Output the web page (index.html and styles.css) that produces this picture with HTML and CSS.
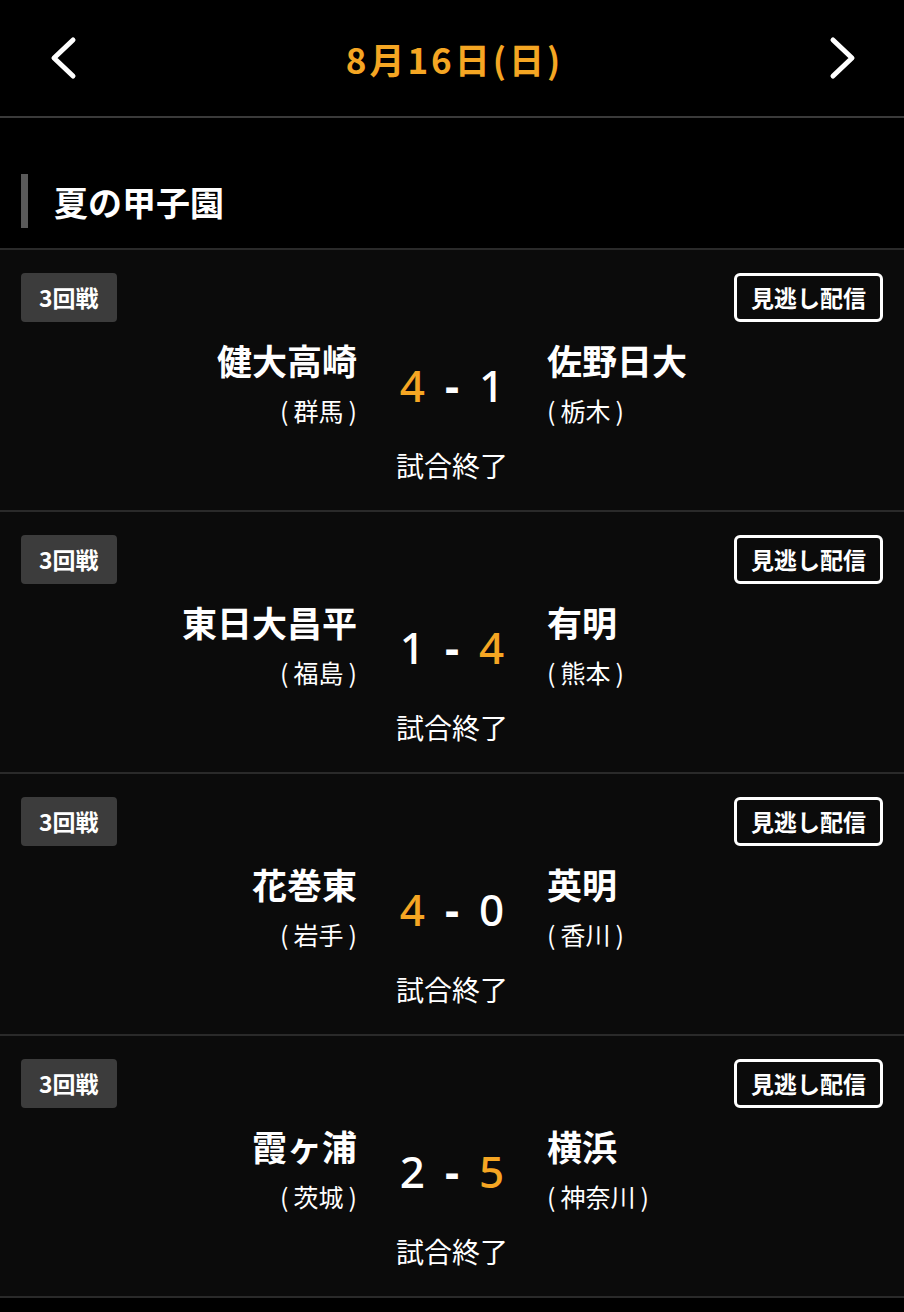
FILE: index.html
```html
<!DOCTYPE html>
<html lang="ja">

<head>
    <meta charset="UTF-8">
    <meta name="viewport" content="width=device-width, initial-scale=1.0">
    <title>試合結果</title>

    <link rel="stylesheet" href="styles.css">
</head>

<body>
    <header class="cabecera">
        <a class="flecha" href="#">
            <svg width="28" height="44" viewBox="0 0 28 44"><polyline points="24,4 5,22 24,40" fill="none" stroke="#fff" stroke-width="5" stroke-linecap="round" stroke-linejoin="round"/></svg>
        </a>
        <h1 class="fecha">8月16日(日)</h1>
        <a class="flecha" href="#">
            <svg width="28" height="44" viewBox="0 0 28 44"><polyline points="4,4 23,22 4,40" fill="none" stroke="#fff" stroke-width="5" stroke-linecap="round" stroke-linejoin="round"/></svg>
        </a>
    </header>

    <h2 class="torneo">夏の甲子園</h2>

    <div class="lista">
        <!-- partido 1 -->
        <div class="partido">
            <div class="fila-top">
                <span class="ronda">3回戦</span>
                <a class="btn-video" href="#">見逃し配信</a>
            </div>
            <div class="marcador">
                <div class="equipo local">
                    <div class="nombre">健大高崎</div>
                    <div class="pref">(&thinsp;群馬&thinsp;)</div>
                </div>
                <div class="score"><span class="gana">4</span><span class="guion">-</span><span>1</span></div>
                <div class="equipo">
                    <div class="nombre">佐野日大</div>
                    <div class="pref">(&thinsp;栃木&thinsp;)</div>
                </div>
            </div>
            <div class="estado">試合終了</div>
        </div>

        <!-- partido 2 -->
        <div class="partido">
            <div class="fila-top">
                <span class="ronda">3回戦</span>
                <a class="btn-video" href="#">見逃し配信</a>
            </div>
            <div class="marcador">
                <div class="equipo local">
                    <div class="nombre">東日大昌平</div>
                    <div class="pref">(&thinsp;福島&thinsp;)</div>
                </div>
                <div class="score"><span>1</span><span class="guion">-</span><span class="gana">4</span></div>
                <div class="equipo">
                    <div class="nombre">有明</div>
                    <div class="pref">(&thinsp;熊本&thinsp;)</div>
                </div>
            </div>
            <div class="estado">試合終了</div>
        </div>

        <!-- partido 3 -->
        <div class="partido">
            <div class="fila-top">
                <span class="ronda">3回戦</span>
                <a class="btn-video" href="#">見逃し配信</a>
            </div>
            <div class="marcador">
                <div class="equipo local">
                    <div class="nombre">花巻東</div>
                    <div class="pref">(&thinsp;岩手&thinsp;)</div>
                </div>
                <div class="score"><span class="gana">4</span><span class="guion">-</span><span>0</span></div>
                <div class="equipo">
                    <div class="nombre">英明</div>
                    <div class="pref">(&thinsp;香川&thinsp;)</div>
                </div>
            </div>
            <div class="estado">試合終了</div>
        </div>

        <!-- partido 4 -->
        <div class="partido">
            <div class="fila-top">
                <span class="ronda">3回戦</span>
                <a class="btn-video" href="#">見逃し配信</a>
            </div>
            <div class="marcador">
                <div class="equipo local">
                    <div class="nombre">霞ヶ浦</div>
                    <div class="pref">(&thinsp;茨城&thinsp;)</div>
                </div>
                <div class="score"><span>2</span><span class="guion">-</span><span class="gana">5</span></div>
                <div class="equipo">
                    <div class="nombre">横浜</div>
                    <div class="pref">(&thinsp;神奈川&thinsp;)</div>
                </div>
            </div>
            <div class="estado">試合終了</div>
        </div>
    </div>
</body>

</html>
```

FILE: styles.css
```css
:root {
    --naranja: #f5a623;
    --fondo: #0b0b0b;
    --linea: #2a2a2a;
}

body {
    margin: 0;
    background: #000;
    color: #fff;
    font-family: "Noto Sans CJK JP", "Noto Sans", sans-serif;
}

.cabecera {
    display: flex;
    align-items: center;
    justify-content: space-between;
    height: 116px;
    padding: 0 47px 0 49px;
    border-bottom: 2px solid #3a3a3a;
}

.flecha {
    display: flex;
}

.fecha {
    margin: 0 0 0 3px;
    font-size: 35px;
    font-weight: bold;
    color: var(--naranja);
    letter-spacing: 3px;
}

.torneo {
    margin: 56px 0 20px 21px;
    height: 54px;
    display: flex;
    align-items: center;
    border-left: 7px solid #5a5a5a;
    padding-left: 26px;
    font-size: 34px;
    font-weight: bold;
}

.lista {
    border-top: 2px solid var(--linea);
}

.partido {
    background: var(--fondo);
    padding: 23px 21px 27px;
    border-bottom: 2px solid var(--linea);
}

.fila-top {
    display: flex;
    justify-content: space-between;
    align-items: center;
}

.ronda {
    background: #3c3c3c;
    border-radius: 4px;
    height: 49px;
    line-height: 49px;
    padding: 0 18px;
    font-size: 23px;
    font-weight: bold;
}

.btn-video {
    height: 43px;
    line-height: 43px;
    padding: 0 14px;
    border: 3px solid #fff;
    border-radius: 6px;
    color: #fff;
    text-decoration: none;
    font-size: 23px;
    font-weight: bold;
}

.marcador {
    display: grid;
    grid-template-columns: 1fr 190px 1fr;
    align-items: center;
    margin: 18px -21px 0;
}

.equipo.local {
    text-align: right;
}

.nombre {
    font-size: 35px;
    font-weight: bold;
    line-height: 40px;
}

.pref {
    font-size: 25px;
    line-height: 36px;
    margin-top: 12px;
}

.score {
    display: flex;
    justify-content: center;
    font-family: "Noto Sans", sans-serif;
    font-size: 44px;
    font-weight: 500;
    line-height: 50px;
    padding-top: 2px;
}

.guion {
    margin: 0 20px;
    font-weight: bold;
}

.gana {
    color: var(--naranja);
}

.estado {
    text-align: center;
    font-size: 28px;
    line-height: 36px;
    margin-top: 19px;
}
```
